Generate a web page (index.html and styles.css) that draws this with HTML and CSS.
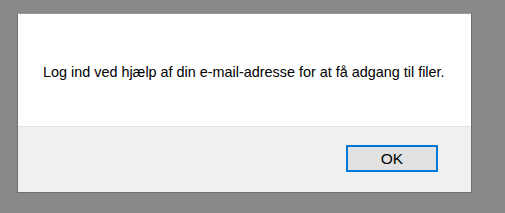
FILE: index.html
```html
<!DOCTYPE html>
<html lang="da">
<head>
  <meta charset="UTF-8">
  <title>Log ind</title>
  <link rel="stylesheet" href="styles.css">
</head>
<body>
<div class="dialog">
  <div class="message">Log ind ved hjælp af din e-mail-adresse for at få adgang til filer.</div>
  <div class="footer">
    <button class="ok-btn">OK</button>
  </div>
</div>
</body>
</html>
```

FILE: styles.css
```css
html, body {
  margin: 0;
  padding: 0;
  background: #898989;
  font-family: "Liberation Sans", Arial, sans-serif;
}
body {
  padding: 13px 0 0 17px;
  height: 213px;
  box-sizing: border-box;
}
.dialog {
  width: 453px;
  border: 1px solid #6f6f6f;
  border-top-color: #9a9a9a;
  background: #fff;
}
.message {
  height: 112px;
  box-sizing: border-box;
  padding: 50px 0 0 25px;
  font-size: 14.4px;
  color: #000;
}
.footer {
  height: 66px;
  box-sizing: border-box;
  border-top: 1px solid #e3e3e3;
  background: #f0f0f0;
  display: flex;
  justify-content: flex-end;
  align-items: flex-start;
  padding: 18px 33px 0 0;
}
.ok-btn {
  width: 92px;
  height: 27px;
  border: 2px solid #0078d7;
  background: #e1e1e1;
  font-family: "Liberation Sans", Arial, sans-serif;
  font-size: 15.5px;
  color: #000;
  padding: 0;
}
```
